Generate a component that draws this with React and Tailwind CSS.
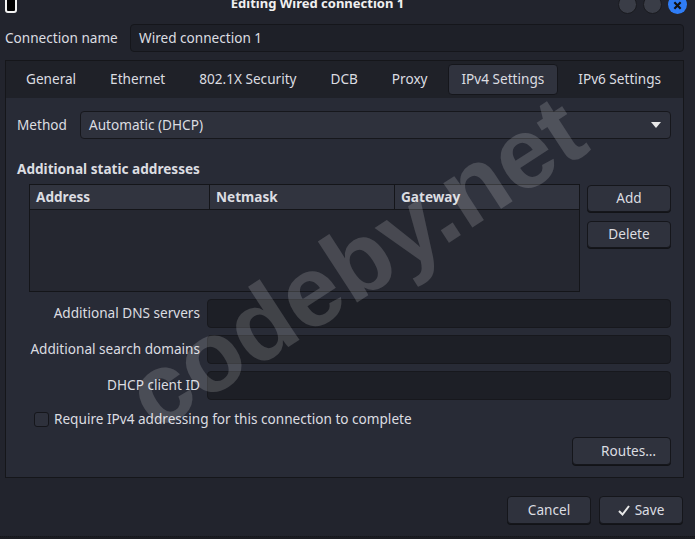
import React from 'react';

const tabs = ['General', 'Ethernet', '802.1X Security', 'DCB', 'Proxy', 'IPv4 Settings', 'IPv6 Settings'];

const Button = ({ children, className = '' }) => (
  <button
    className={`flex items-center justify-center rounded-[4px] border border-[#15161b] bg-[#2f323d] text-[13.6px] text-[#dcdde1] shadow-[0_1px_0_#121317] ${className}`}
  >
    {children}
  </button>
);

const Field = ({ label, className = '' }) => (
  <div className={`flex items-center gap-[7px] ${className}`}>
    <div className="w-[183px] shrink-0 text-right">{label}</div>
    <div className="h-full flex-1 rounded-[4px] border border-[#17181d] bg-[#1d1f26]" />
  </div>
);

const App = () => {
  return (
    <div className="relative h-[539px] w-[695px] overflow-hidden bg-[#22242d] font-['Noto_Sans',sans-serif] text-[13.6px] text-[#dcdde1]">
      {/* title bar, top part is cut off */}
      <div className="-mt-[8px] flex h-[24px] items-center pl-[5px] pr-[8px]">
        <div className="h-[18px] w-[12px] rounded-b-[3px] border-2 border-[#f2f2f2] bg-black" />
        <div className="flex-1 text-center text-[13px] font-bold text-[#f0f0f0]">Editing Wired connection 1</div>
        <div className="flex items-center gap-[6px]">
          <div className="h-[19px] w-[19px] rounded-full border border-[#1a1b20] bg-[#3a3d47]" />
          <div className="h-[19px] w-[19px] rounded-full border border-[#1a1b20] bg-[#3a3d47]" />
          <div className="flex h-[19px] w-[19px] items-center justify-center rounded-full bg-[#2f7df6]">
            <svg width="9" height="9" viewBox="0 0 10 10" className="mt-[3px]">
              <path d="M1.5 1.5 L8.5 8.5 M8.5 1.5 L1.5 8.5" stroke="#111" strokeWidth="2.4" />
            </svg>
          </div>
        </div>
      </div>

      {/* connection name */}
      <div className="mt-[8px] flex h-[28px] items-center pl-[5px] pr-[11px]">
        <div className="w-[125px] shrink-0">Connection name</div>
        <div className="flex h-full flex-1 items-center rounded-[4px] border border-[#15161b] bg-[#1e2028] px-[8px]">
          Wired connection 1
        </div>
      </div>

      {/* notebook */}
      <div className="ml-[5px] mr-[11px] mt-[8px] flex h-[418px] flex-col border border-[#15161a]">
        <div className="flex h-[37px] shrink-0 items-start bg-[#1f2128] pl-[3px] pt-[3px]">
          {tabs.map((t) => (
            <div key={t} className="px-[3px]">
              <div
                className={`flex h-[31px] items-center whitespace-nowrap rounded-[4px] px-[13px] ${
                  t === 'IPv4 Settings' ? 'border border-[#15161b] bg-[#30333e]' : 'border border-transparent'
                }`}
              >
                {t}
              </div>
            </div>
          ))}
        </div>

        <div className="flex flex-1 flex-col bg-[#282b36] pl-[11px] pr-[12px]">
          {/* method */}
          <div className="mt-[13px] flex h-[28px] items-center">
            <div className="w-[63px] shrink-0">Method</div>
            <div className="flex h-full flex-1 items-center justify-between rounded-[4px] border border-[#16171c] bg-[#2e313c] pl-[8px] pr-[9px]">
              <span>Automatic (DHCP)</span>
              <svg width="10" height="6" viewBox="0 0 10 6">
                <path d="M0 0 L10 0 L5 6 Z" fill="#e8e8e8" />
              </svg>
            </div>
          </div>

          <div className="mt-[20px] font-bold leading-[20px]">Additional static addresses</div>

          {/* address table + buttons */}
          <div className="ml-[12px] mt-[5px] flex h-[108px] gap-[7px]">
            <div className="flex flex-1 flex-col border border-[#141519] bg-[#252730]">
              <div className="flex h-[25px] shrink-0 border-b border-[#141519] bg-[#31343f] font-bold">
                <div className="flex w-[180px] items-center border-r border-[#141519] px-[6px]">Address</div>
                <div className="flex w-[185px] items-center border-r border-[#141519] px-[6px]">Netmask</div>
                <div className="flex flex-1 items-center px-[6px]">Gateway</div>
              </div>
            </div>
            <div className="flex w-[84px] flex-col gap-[9px] pt-[1px]">
              <Button className="h-[27px]">Add</Button>
              <Button className="h-[27px]">Delete</Button>
            </div>
          </div>

          <Field label="Additional DNS servers" className="mt-[7px] h-[29px]" />
          <Field label="Additional search domains" className="mt-[7px] h-[29px]" />
          <Field label="DHCP client ID" className="mt-[7px] h-[29px]" />

          <div className="mt-[9px] flex items-center gap-[5px] pl-[17px]">
            <div className="h-[15px] w-[15px] rounded-[3px] border border-[#15161b] bg-[#2e313c]" />
            <span>Require IPv4 addressing for this connection to complete</span>
          </div>

          <div className="mt-[8px] flex justify-end">
            <Button className="h-[28px] w-[99px] justify-end pr-[14px]">Routes…</Button>
          </div>
        </div>
      </div>

      {/* dialog buttons */}
      <div className="mt-[18px] flex justify-end gap-[8px] pr-[12px]">
        <Button className="h-[28px] w-[84px]">Cancel</Button>
        <Button className="h-[28px] w-[84px] gap-[5px]">
          <svg width="12" height="11" viewBox="0 0 12 11">
            <path d="M1 6 L4.5 9.5 L11 1" stroke="#e8e8e8" strokeWidth="2" fill="none" />
          </svg>
          Save
        </Button>
      </div>

      <div className="absolute bottom-0 left-0 h-[3px] w-full border-t border-dotted border-[#15161a] bg-[#1b1c22]" />

      {/* watermark */}
      <div className="pointer-events-none absolute left-[355px] top-[262px] -translate-x-1/2 -translate-y-1/2 -rotate-[33deg] whitespace-nowrap font-['Liberation_Sans',sans-serif] text-[100px] font-bold leading-none text-white/[0.16]">
        codeby.net
      </div>
    </div>
  );
};

export default App;
